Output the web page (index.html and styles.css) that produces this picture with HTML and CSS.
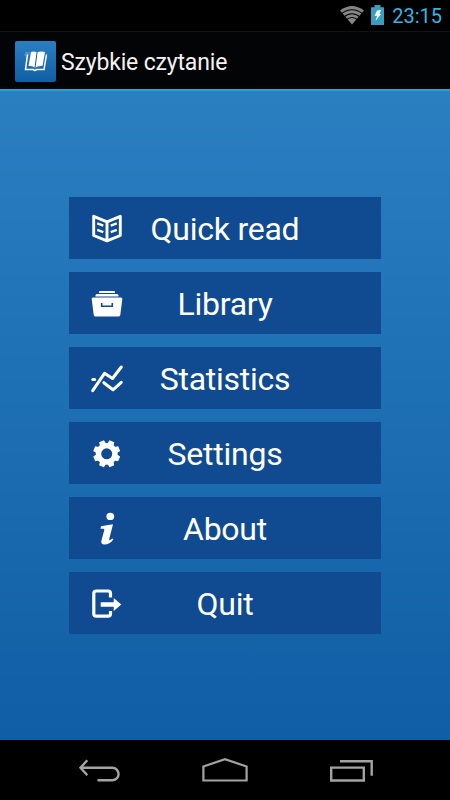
FILE: index.html
```
<!DOCTYPE html>
<html lang="pl">
  <head>
    <meta charset="UTF-8" />
    <meta name="viewport" content="width=device-width, initial-scale=1.0" />
    <title>Szybkie czytanie</title>
    <link rel="stylesheet" href="styles.css">
  </head>
  <body>
    <div class="status-bar">
      <svg class="wifi" width="26" height="20" viewBox="0 0 26 20">
        <path d="M1 5.5Q13 -3.5 25 5.5L13 19.5Z" fill="#858585" />
        <g fill="none" stroke="#000" stroke-width="1.1">
          <path d="M2 9Q13 0.5 24 9" />
          <path d="M4 12.5Q13 5 22 12.5" />
          <path d="M7 15Q13 10 19 15" />
        </g>
      </svg>
      <svg class="battery" width="13" height="20" viewBox="0 0 13 20">
        <path d="M0 2.2H3.5V0H9.5V2.2H13V20H0Z" fill="#3a9dc0" />
        <path d="M6 5.5L10 5L8.5 9H10L4.5 16L6 11H3.5Z" fill="#fff" />
      </svg>
      <span class="clock">23:15</span>
    </div>

    <header class="action-bar">
      <div class="app-icon">
        <svg width="40" height="40" viewBox="0 0 40 40">
          <path d="M12.5 13.5L10.5 28.5H18.5Q20 30.5 21.5 28.5H29L31.5 13.5" fill="none" stroke="#fff" stroke-width="1.5" />
          <path d="M16 11Q19 10 22 11.5Q26 10 30 11L27.5 25Q23 24.5 20 27Q18 24.5 13.5 25Z" fill="#fff" />
          <path d="M22 11.5L20 27" stroke="#17589c" stroke-width="1" />
          <path d="M10 12H15M9.5 14H14M11 17H13" stroke="#fff" stroke-width="0.8" opacity="0.5" />
        </svg>
      </div>
      <h1 class="title">Szybkie czytanie</h1>
    </header>

    <main class="menu">
      <button class="menu-item">
        <svg class="icon" viewBox="0 0 56 44" fill="none" stroke="#fff" stroke-width="2.9" stroke-linejoin="round">
          <path d="M13.7 10.3L27 15.8L40.3 10.3V29.5L27 34.8L13.7 29.5ZM27 15.8V34.8" />
          <path d="M17.2 17.4L23.3 19.7M17.2 23.9L23.3 26.2M36.8 17.4L30.7 19.7M36.8 23.9L30.7 26.2" stroke-width="2.3" />
        </svg>
        <span class="label">Quick read</span>
      </button>
      <button class="menu-item">
        <svg class="icon" viewBox="0 0 56 44" fill="#fff">
          <path d="M20 10H34Q35 10 35 11V12H19V11Q19 10 20 10Z" />
          <path d="M17 13H37Q38.5 13 38.5 14.5V15.5H15.5V14.5Q15.5 13 17 13Z" />
          <path d="M13 16.5H41Q42.5 16.5 42.3 18L40.3 34Q40 35.5 38.5 35.5H15.5Q14 35.5 13.7 34L11.7 18Q11.5 16.5 13 16.5Z" />
          <path d="M21.7 22V25.2H32.3V22" fill="none" stroke="#104a91" stroke-width="1.6" />
        </svg>
        <span class="label">Library</span>
      </button>
      <button class="menu-item">
        <svg class="icon" viewBox="0 0 56 44" fill="none" stroke="#fff" stroke-width="3" stroke-linecap="round" stroke-linejoin="round">
          <path d="M12.7 34.7L24.5 17.3L32.5 22.5L41.3 11" />
          <path d="M12.8 23.6H14.7M23.8 26.7L33 33.8L41.3 26.3" />
        </svg>
        <span class="label">Statistics</span>
      </button>
      <button class="menu-item">
        <svg class="icon" viewBox="0 0 56 44">
          <circle cx="26.7" cy="22.8" r="8.2" fill="none" stroke="#fff" stroke-width="5.4" />
          <!-- eight teeth, two per rotated bar -->
          <g fill="#fff">
            <path id="teeth" d="M23.5 13L24.1 9.3H29.3L29.9 13ZM23.5 32.6L24.1 36.3H29.3L29.9 32.6Z" transform="rotate(22.5 26.7 22.8)" />
            <use href="#teeth" transform="rotate(45 26.7 22.8)" />
            <use href="#teeth" transform="rotate(90 26.7 22.8)" />
            <use href="#teeth" transform="rotate(135 26.7 22.8)" />
          </g>
        </svg>
        <span class="label">Settings</span>
      </button>
      <button class="menu-item">
        <svg class="icon" viewBox="0 0 56 44" fill="#fff">
          <ellipse cx="30.3" cy="10.4" rx="3.9" ry="3.7" />
          <path d="M21 20.2Q26.5 19.2 33 18.2L29.2 33.2Q29 34.8 30.2 34.1L32.5 32.4L33.4 33.5Q29.5 38.6 24.5 38.6Q20.4 38.3 21.5 34.2L24.3 23.9Q24.5 22.6 23 22.7L20.5 22.7Z" />
        </svg>
        <span class="label">About</span>
      </button>
      <button class="menu-item">
        <svg class="icon" viewBox="0 0 56 44">
          <path d="M30.5 16.5V12.5Q30.5 10 28 10H16.3Q13.8 10 13.8 12.5V32.7Q13.8 35.2 16.3 35.2H28Q30.5 35.2 30.5 32.7V30" fill="none" stroke="#fff" stroke-width="3.2" />
          <path d="M20.7 21.2H33.7V17L41.3 23.5L33.7 30V25.8H20.7Z" fill="#fff" />
        </svg>
        <span class="label">Quit</span>
      </button>
    </main>

    <nav class="nav-bar">
      <svg viewBox="0 0 50 30" fill="none" stroke="#a3a3a3" stroke-width="2.4">
        <path d="M12.3 4.3L5.5 11.7L12.3 19.3M5.5 11.7H37.3A6.3 6.3 0 0 1 37.3 24.3H22.5" transform="translate(0 1)" />
      </svg>
      <svg viewBox="0 0 50 30" fill="none" stroke="#a3a3a3" stroke-width="2.2">
        <path d="M3.4 11.5L25 4.2L46.6 11.5V25.5H3.4Z" />
      </svg>
      <svg viewBox="0 0 50 30" fill="none" stroke="#a3a3a3" stroke-width="2.4">
        <path d="M6.2 12.6H38.8V25.5H6.2ZM15 6.3H46.7V20.7" />
      </svg>
    </nav>
  </body>
</html>
```
FILE: styles.css
```
* {
  box-sizing: border-box;
  font-family: Roboto, 'Noto Sans', sans-serif;
}

body {
  display: flex;
  flex-direction: column;
  height: 800px;
  margin: 0;
  background: linear-gradient(#2a7fc1 91px, #105ea5 740px);
}

.status-bar {
  display: flex;
  justify-content: flex-end;
  height: 31px;
  padding: 5px 8px 0 0;
  background-color: #000;
}

.wifi {
  margin-right: 6px;
}

.battery {
  margin-right: 8px;
}

.clock {
  color: #33b5e5;
  font-size: 20px;
  line-height: 22px;
}

.action-bar {
  display: flex;
  height: 60px;
  padding: 9px 15px 0;
  background-color: #030405;
  border-top: 1px solid #121212;
  border-bottom: 2px solid #2aa0d4;
}

.app-icon {
  width: 41px;
  height: 41px;
  margin-right: 5px;
  border-radius: 2px;
  background: linear-gradient(#2a7fc1, #105ea5);
}

.title {
  margin: 0;
  color: #f3f3f3;
  font-size: 23px;
  font-weight: 400;
  line-height: 43px;
  letter-spacing: -0.17px;
  white-space: nowrap;
}

.menu {
  display: flex;
  flex: 1;
  flex-direction: column;
  justify-content: center;
  align-items: center;
  gap: 13px;
}

.menu-item {
  display: grid;
  grid-template-columns: 56px 1fr 56px;
  width: 312px;
  height: 62px;
  padding: 0 11px;
  border: none;
  background-color: #104a91;
  color: #fff;
  cursor: pointer;
}

.icon {
  width: 56px;
  height: 44px;
  margin-bottom: 2px;
  align-self: center;
}

.label {
  font-size: 32px;
  line-height: 64px;
  letter-spacing: -0.25px;
  text-align: center;
  white-space: nowrap;
}

.nav-bar {
  display: flex;
  justify-content: space-between;
  height: 60px;
  padding: 15px 75px 0;
  background-color: #000;
}

.nav-bar svg {
  width: 50px;
  height: 30px;
}
```
